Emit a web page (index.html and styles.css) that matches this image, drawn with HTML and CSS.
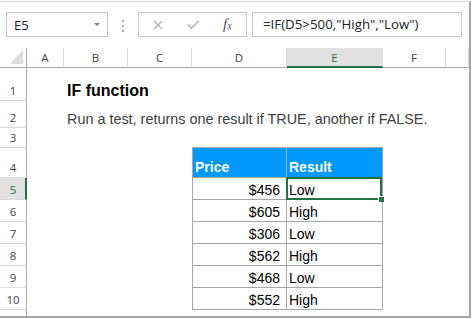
FILE: index.html
```html
<!DOCTYPE html>
<html>
    <head>
        <title>IF function</title>
        <link rel="stylesheet" href="styles.css">
    </head>
    <body>
        <div class="window">
            <div class="formula-bar">
                <div class="name-box"><span>E5</span><span class="drop"></span></div>
                <div class="grip"><i></i><i></i><i></i></div>
                <div class="fx-group">
                    <svg class="icon-cancel" width="10" height="10" viewBox="0 0 10 10">
                        <path d="M1 1L9 9M9 1L1 9" stroke="#b3b3b3" stroke-width="1.4" fill="none"/>
                    </svg>
                    <svg class="icon-enter" width="13" height="9" viewBox="0 0 13 9">
                        <path d="M1 4.5L4.5 8L12 1" stroke="#b3b3b3" stroke-width="1.6" fill="none"/>
                    </svg>
                    <span class="fx">f<sub>x</sub></span>
                </div>
                <div class="formula">=IF(D5&gt;500,"High","Low")</div>
            </div>

            <div class="sheet">
                <!-- column headers -->
                <div class="corner">
                    <svg width="13" height="14" viewBox="0 0 13 14"><path d="M13 0L13 14L0 14Z" fill="#dcdcdc"/></svg>
                </div>
                <div class="ch">A</div>
                <div class="ch">B</div>
                <div class="ch">C</div>
                <div class="ch">D</div>
                <div class="ch active">E</div>
                <div class="ch">F</div>
                <div class="ch"></div>

                <!-- rows -->
                <div class="rh">1</div>
                <div class="cell title">IF function</div>

                <div class="rh">2</div>
                <div class="cell note">Run a test, returns one result if TRUE, another if FALSE.</div>

                <div class="rh">3</div>
                <div class="cell col-d table-top"></div>
                <div class="cell col-e table-top"></div>

                <div class="rh">4</div>
                <div class="cell col-d tbl th">Price</div>
                <div class="cell col-e tbl th">Result</div>

                <div class="rh active">5</div>
                <div class="cell col-d tbl num">$456</div>
                <div class="cell col-e tbl selected">Low<div class="sel"><span class="handle"></span></div></div>

                <div class="rh">6</div>
                <div class="cell col-d tbl num">$605</div>
                <div class="cell col-e tbl">High</div>

                <div class="rh">7</div>
                <div class="cell col-d tbl num">$306</div>
                <div class="cell col-e tbl">Low</div>

                <div class="rh">8</div>
                <div class="cell col-d tbl num">$562</div>
                <div class="cell col-e tbl">High</div>

                <div class="rh">9</div>
                <div class="cell col-d tbl num">$468</div>
                <div class="cell col-e tbl">Low</div>

                <div class="rh">10</div>
                <div class="cell col-d tbl num">$552</div>
                <div class="cell col-e tbl">High</div>

                <div class="rh">11</div>
            </div>
        </div>
    </body>
</html>
```

FILE: styles.css
```css
html, body {
    margin: 0;
}
body {
    width: 472px;
    height: 319px;
    overflow: hidden;
    background: #fff;
    font-family: "Liberation Sans", Arial, sans-serif;
}
.window {
    margin-top: 1px;
    width: 469px;
    height: 314px;
    border-top: 1px solid #d9d9d9;
    border-right: 2px solid #a6a6a6;
    border-bottom: 2px solid #a6a6a6;
    overflow: hidden;
}

/* formula bar */
.formula-bar {
    display: flex;
    align-items: flex-start;
    height: 46px;
    padding: 10px 0 0 6px;
    box-sizing: border-box;
    font-family: "Open Sans", sans-serif;
    font-size: 13px;
    color: #222;
}
.name-box {
    width: 102px;
    height: 25px;
    box-sizing: border-box;
    border: 1px solid #c6c6c6;
    display: flex;
    align-items: center;
    justify-content: space-between;
    padding: 0 7px;
}
.drop {
    border-left: 3px solid transparent;
    border-right: 3px solid transparent;
    border-top: 3px solid #7f7f7f;
}
.grip {
    width: 30px;
    display: flex;
    flex-direction: column;
    align-items: center;
    gap: 3px;
    padding-top: 8px;
}
.grip i {
    width: 2px;
    height: 2px;
    background: #a8a8a8;
}
.fx-group {
    width: 109px;
    height: 25px;
    box-sizing: border-box;
    border: 1px solid #c6c6c6;
    display: flex;
    align-items: center;
    padding-left: 14px;
}
.icon-enter {
    margin-left: 24px;
}
.fx {
    margin-left: 23px;
    font-family: "Liberation Serif", serif;
    font-style: italic;
    font-size: 15px;
    color: #555;
}
.fx sub {
    font-size: 10px;
    vertical-align: 0;
}
.formula {
    margin-left: 5px;
    width: 210px;
    height: 25px;
    box-sizing: border-box;
    border: 1px solid #c6c6c6;
    padding-left: 10px;
    font-size: 13.3px;
    line-height: 23px;
    white-space: nowrap;
}

/* sheet grid */
.sheet {
    display: grid;
    grid-template-columns: 27px 37px 64px 64px 95px 96px 63px 1fr;
    grid-template-rows: 20px 33px 27px 20px 30px repeat(6, 22px) 22px;
}
.corner, .ch, .rh {
    box-sizing: border-box;
    display: flex;
    font-family: "Open Sans", sans-serif;
    font-size: 11.5px;
    line-height: 1;
    color: #444;
}
.corner {
    justify-content: flex-end;
    align-items: flex-end;
    padding: 0 3px 3px 0;
    border-right: 1px solid #ababab;
    border-bottom: 1px solid #ababab;
}
.ch {
    justify-content: center;
    align-items: flex-end;
    padding-bottom: 4px;
    border-right: 1px solid #dadada;
    border-bottom: 1px solid #ababab;
}
.ch.active {
    background: #e1e1e1;
    color: #217346;
    border-bottom: 2px solid #217346;
    padding-bottom: 3px;
}
.rh {
    grid-column: 1;
    justify-content: center;
    align-items: flex-end;
    padding-bottom: 4px;
    border-right: 1px solid #ababab;
    border-bottom: 1px solid #dadada;
}
.rh.active {
    background: #e1e1e1;
    color: #217346;
    border-right: 2px solid #217346;
    padding-left: 1px;
}

/* cells */
.cell {
    box-sizing: border-box;
    display: flex;
    align-items: flex-end;
    white-space: nowrap;
    line-height: 1;
    font-size: 14px;
    color: #000;
}
.title {
    grid-column: 3;
    font-size: 16px;
    font-weight: bold;
    padding: 0 0 2px 3px;
}
.note {
    grid-column: 3;
    font-size: 14.4px;
    color: #404040;
    padding: 0 0 2px 3px;
}
.col-d {
    grid-column: 5;
}
.col-e {
    grid-column: 6;
}
.table-top {
    border-bottom: 1px solid #a6a6a6;
}
.tbl {
    border-right: 1px solid #a6a6a6;
    border-bottom: 1px solid #a6a6a6;
    padding: 0 0 2px 2px;
}
.col-d.tbl {
    border-left: 1px solid #a6a6a6;
}
.th {
    background: #0099ff;
    color: #fff;
    font-weight: bold;
    padding-bottom: 3px;
}
.num {
    justify-content: flex-end;
    padding-right: 6px;
}
.selected {
    position: relative;
}
.sel {
    position: absolute;
    top: -1px;
    left: -1px;
    right: 0;
    bottom: -1px;
    border: 2px solid #217346;
}
.handle {
    position: absolute;
    right: -4px;
    bottom: -4px;
    width: 5px;
    height: 5px;
    background: #217346;
    border-left: 1px solid #fff;
    border-top: 1px solid #fff;
}
```
